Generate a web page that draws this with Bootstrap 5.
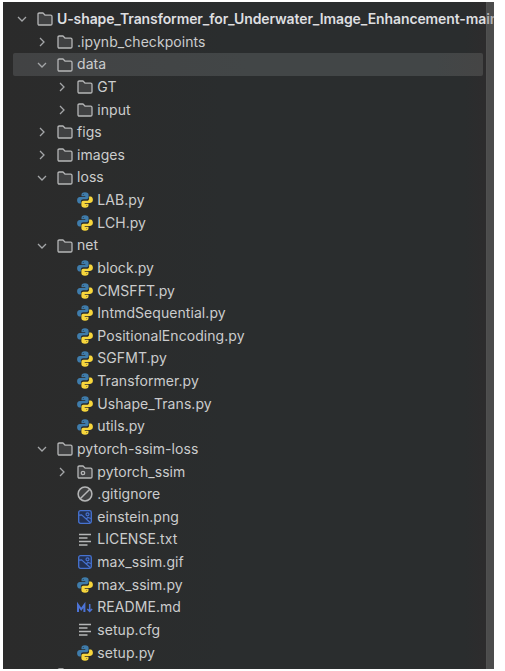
<!DOCTYPE html>
<html lang="en">
<head>
<meta charset="utf-8">
<meta name="viewport" content="width=device-width, initial-scale=1">
<title>Project tree</title>
<link href="https://cdn.jsdelivr.net/npm/bootstrap@5.3.0/dist/css/bootstrap.min.css" rel="stylesheet">
<style>
body{background:#fff;font-family:Inter,"Liberation Sans",sans-serif;font-size:14px;letter-spacing:.06px;color:#cbcccd;height:671px;overflow:hidden;padding:2px 11px 2px 3px}
.tree-panel{height:667px;background:linear-gradient(90deg,#2b2b2b 0,#2b2c2c 20%,#2a2d2e 45%,#2a2d2e 94%,#2d2c2d 98%)}
.tree-list{padding:6px 0 0 10px;width:480px;flex:none}
.tree-row{height:22.64px;line-height:22.64px;white-space:nowrap;border-radius:2px}
.tree-row.depth-0{padding-left:2px}
.tree-row.depth-1{padding-left:22px}
.tree-row.depth-2{padding-left:42.3px}
.tree-row.is-selected{background:linear-gradient(90deg,#424344,#424647 50%,#424647 90%,#454545);width:470px}
.root-name{font-weight:600;letter-spacing:-.11px;color:#dedfe0}
.tree-row svg{flex:none;display:block}
.chev{width:14px;height:14px;margin-right:8px}
.ico{width:16px;height:16px;margin-right:4px}
.scroll-track{width:8px;background:rgba(118,118,118,.43);border-left:1px solid rgba(90,90,90,.3);position:relative;z-index:2}
</style>
</head>
<body>
<svg width="0" height="0" class="d-none" aria-hidden="true">
<symbol id="down" viewBox="0 0 14 14"><path d="M3 5l4 4 4-4" fill="none" stroke="#a4a6a8" stroke-width="1.3"/></symbol>
<symbol id="right" viewBox="0 0 14 14"><path d="M5 3l4 4-4 4" fill="none" stroke="#a4a6a8" stroke-width="1.3"/></symbol>
<symbol id="folder" viewBox="0 0 16 16"><path d="M1 3.300Q1 2 2.300 2H6l2.200 2.200h5.400Q15 4.200 15 5.500v7.200Q15 14 13.700 14H2.300Q1 14 1 12.700Z" fill="#404142" stroke="#b5b6b7" stroke-width="1.300" stroke-linejoin="round"/></symbol>
<symbol id="package" viewBox="0 0 16 16"><path d="M1 3.300Q1 2 2.300 2H6l2.200 2.200h5.400Q15 4.200 15 5.500v7.200Q15 14 13.700 14H2.300Q1 14 1 12.700Z" fill="#404142" stroke="#b5b6b7" stroke-width="1.300"/><circle cx="6" cy="9" r="1.700" fill="none" stroke="#b5b6b7" stroke-width="1.300"/></symbol>
<symbol id="python" viewBox="0 0 16 16"><path d="M8 .3C5.200 .3 4.500 1.400 4.500 2.800v1.500h3.800v.8H2.900C1.100 5.100.1 6.400.1 8.200s.9 3.200 2.300 3.200h1.500V9.500c0-1.400 1-2.300 2.300-2.300h3.500c1.100 0 1.900-.8 1.900-1.900V2.800C11.600 1.300 10.500.3 8 .3Z" fill="#3f7cab"/><path d="M8 15.700c2.800 0 3.500-1.100 3.500-2.500v-1.500H7.700v-.8h5.400c1.800 0 2.800-1.300 2.800-3.100s-.9-3.200-2.300-3.200h-1.500v1.900c0 1.400-1 2.300-2.300 2.300H6.300c-1.100 0-1.900.8-1.900 1.900v2.500c0 1.500 1.100 2.500 3.600 2.500Z" fill="#f7d63c"/><circle cx="6.300" cy="2.500" r=".6" fill="#29465c"/><circle cx="9.700" cy="13.500" r=".6" fill="#8b7b30"/></symbol>
<symbol id="ignore" viewBox="0 0 16 16"><circle cx="8" cy="8" r="6.900" fill="#404142" stroke="#b5b6b7" stroke-width="1.500"/><path d="M3.200 12.800l9.600-9.600" stroke="#b5b6b7" stroke-width="1.500"/></symbol>
<symbol id="picture" viewBox="0 0 16 16"><rect x="1.700" y="1.700" width="12.600" height="12.600" rx="1.800" fill="#223052" stroke="#4672d0" stroke-width="1.300"/><path d="M2 6.200l2.600-.4 8.800 8M9 10l2-1.500 3 1" fill="none" stroke="#4672d0" stroke-width="1.200"/><circle cx="10.500" cy="5.300" r="1.500" fill="none" stroke="#4672d0" stroke-width="1.200"/></symbol>
<symbol id="lines" viewBox="0 0 16 16"><path d="M2 2.500h12M2 6h8.500M2 9.500h12M2 13h8.500" stroke="#b5b6b7" stroke-width="1.300"/></symbol>
<symbol id="markdown" viewBox="0 0 16 16"><path d="M1 12V4.800l3.200 4.500 3.200-4.500V12" fill="none" stroke="#4c73d6" stroke-width="2"/><path d="M12.700 4v7.300M10.300 9l2.400 2.500L15.100 9" fill="none" stroke="#4c73d6" stroke-width="1.500"/></symbol>
</svg>
<main class="tree-panel d-flex justify-content-between overflow-hidden">
<div class="tree-list" id="tree"></div>
<div class="scroll-track"></div>
</main>
<script>
// depth, arrow, icon, name
const rows = [
[0,"down","folder","U-shape_Transformer_for_Underwater_Image_Enhancement-main"],
[1,"right","folder",".ipynb_checkpoints"],[1,"down","folder","data"],
[2,"right","folder","GT"],[2,"right","folder","input"],
[1,"right","folder","figs"],[1,"right","folder","images"],[1,"down","folder","loss"],
[2,"","python","LAB.py"],[2,"","python","LCH.py"],[1,"down","folder","net"],
[2,"","python","block.py"],[2,"","python","CMSFFT.py"],[2,"","python","IntmdSequential.py"],
[2,"","python","PositionalEncoding.py"],[2,"","python","SGFMT.py"],[2,"","python","Transformer.py"],
[2,"","python","Ushape_Trans.py"],[2,"","python","utils.py"],
[1,"down","folder","pytorch-ssim-loss"],[2,"right","package","pytorch_ssim"],
[2,"","ignore",".gitignore"],[2,"","picture","einstein.png"],[2,"","lines","LICENSE.txt"],
[2,"","picture","max_ssim.gif"],[2,"","python","max_ssim.py"],[2,"","markdown","README.md"],
[2,"","lines","setup.cfg"],[2,"","python","setup.py"],[1,"","folder",""]];
document.getElementById("tree").innerHTML = rows.map(([d,a,i,n]) =>
`<div class="tree-row depth-${d} d-flex align-items-center${n==="data"?" is-selected":""}"><svg class="chev">${a?`<use href="#${a}"/>`:""}</svg><svg class="ico"><use href="#${i}"/></svg><span class="${d?"":"root-name"}">${n}</span></div>`).join("");
</script>
<script src="https://cdn.jsdelivr.net/npm/bootstrap@5.3.0/dist/js/bootstrap.bundle.min.js"></script>
</body>
</html>
